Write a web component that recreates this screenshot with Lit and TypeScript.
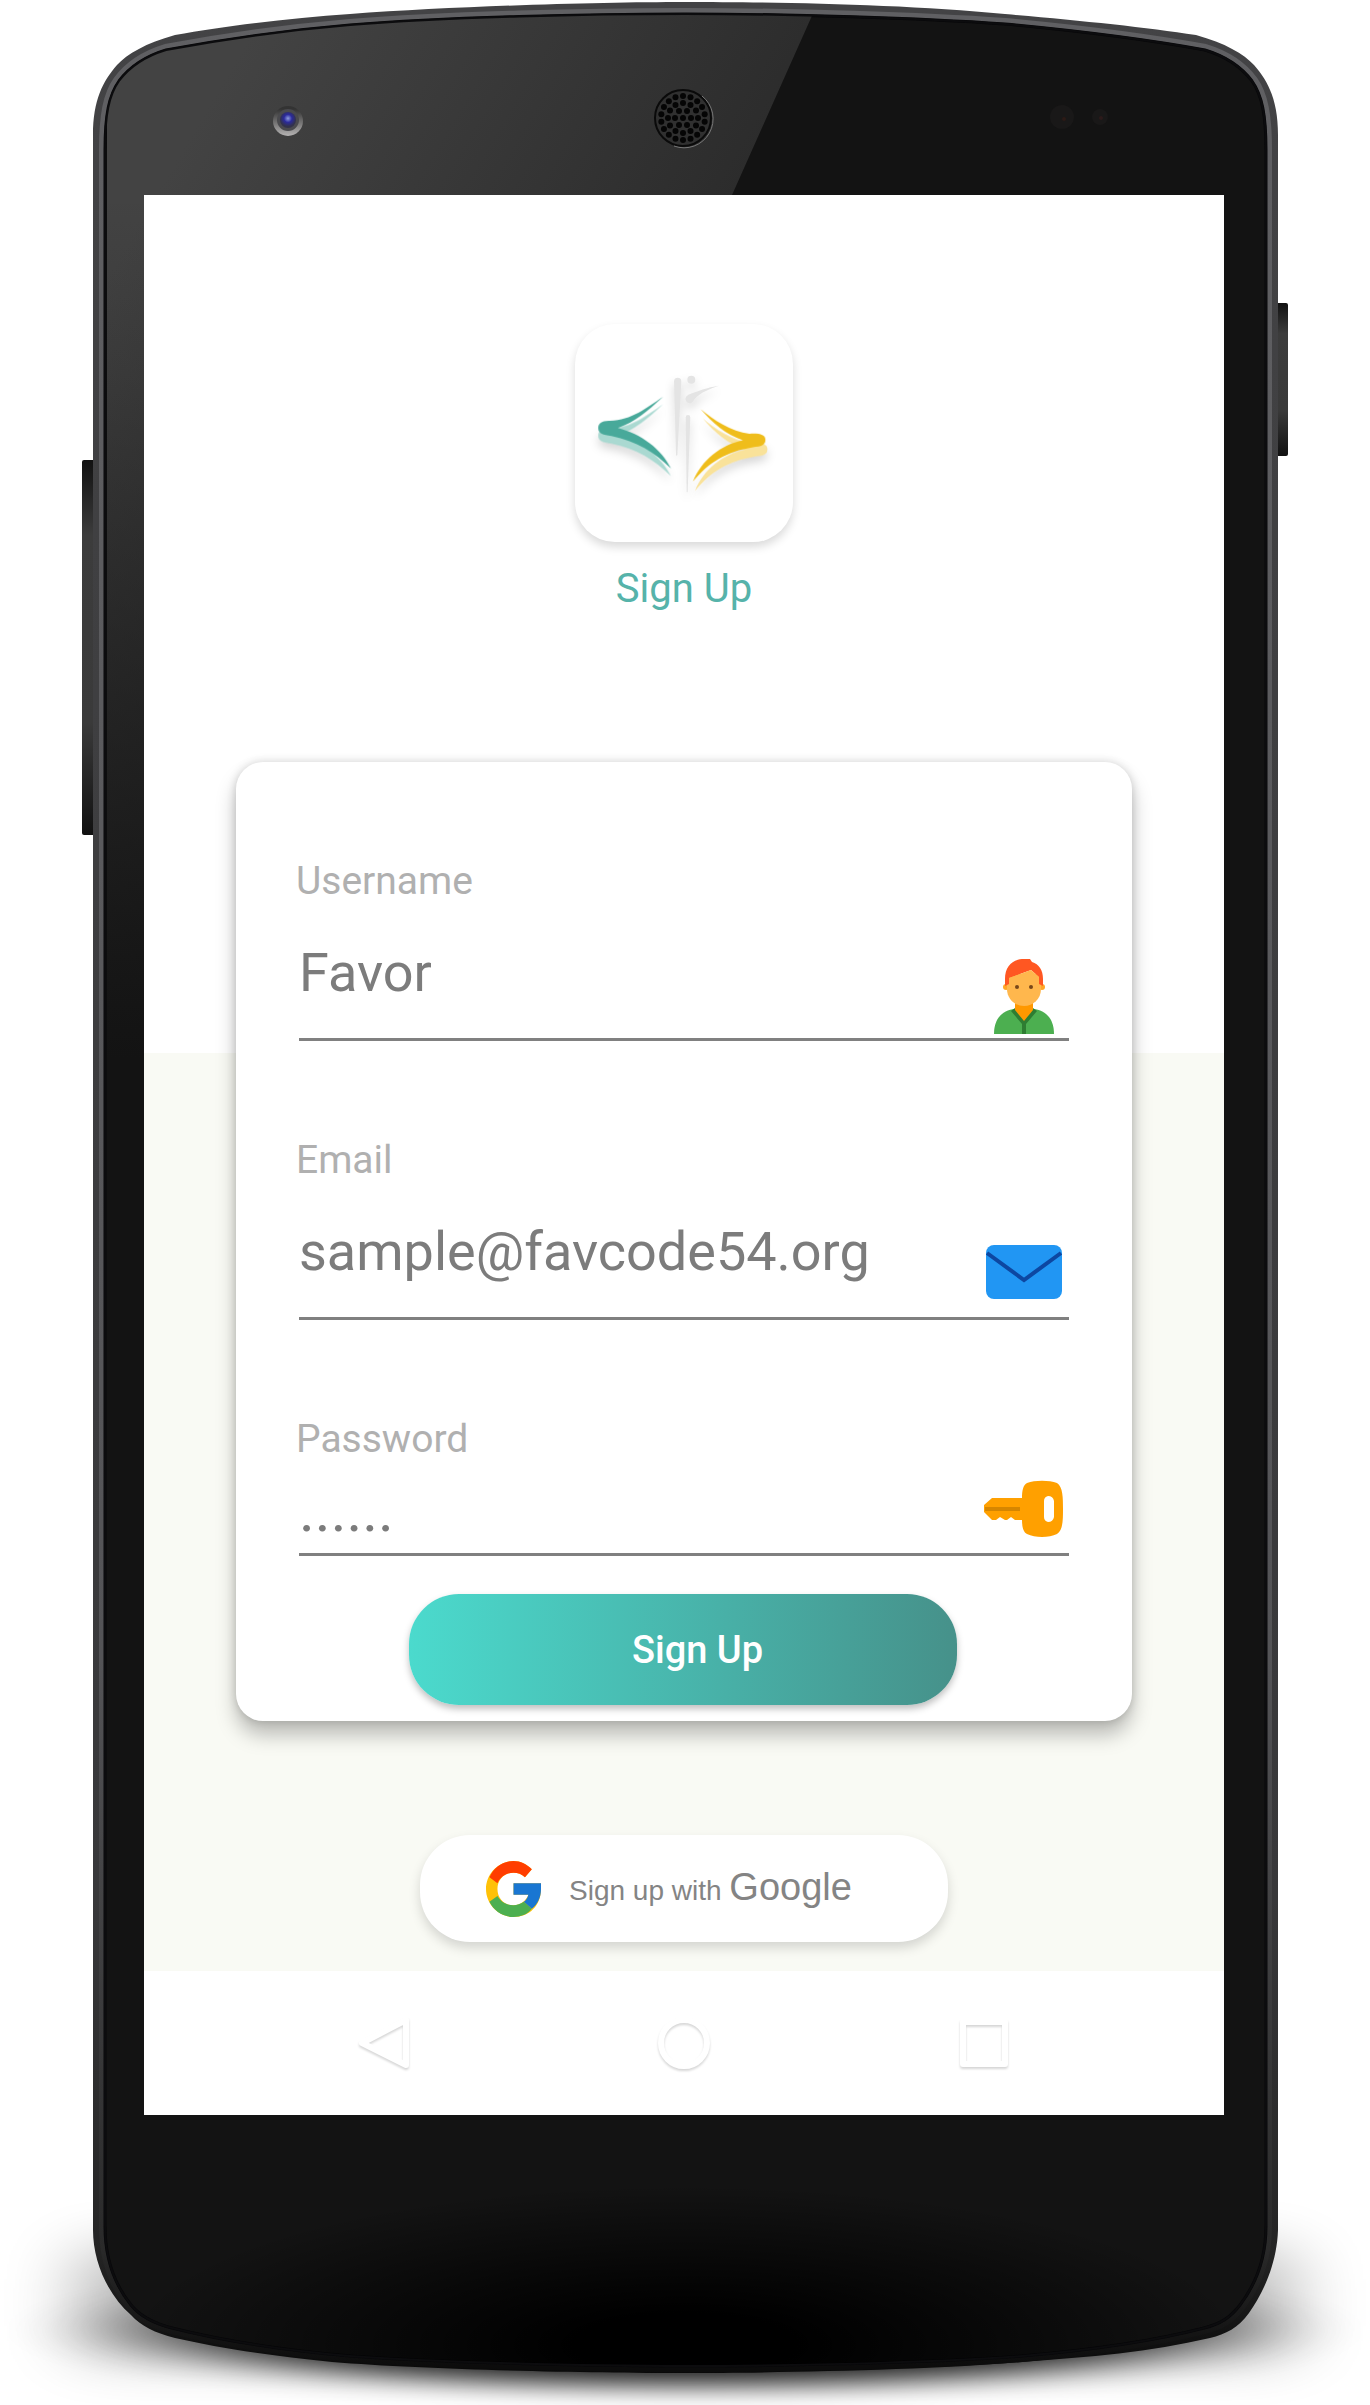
import { LitElement, html, svg, css } from "lit";
import { customElement, property } from "lit/decorators.js";

const OUTER =
  "M685 2 C770 2 900 4 1005 14 C1075 20 1145 27 1196 35 C1225 43 1244 54 1254 65 C1268 81 1278 100 1278 135 V2230 C1277 2262 1264 2292 1249 2313 C1238 2328 1226 2334 1210 2338 C1150 2352 1090 2357 1022 2362 C930 2370 780 2373 685 2373 C590 2373 430 2370 332 2362 C270 2356 220 2348 175 2338 C155 2333 141 2326 131 2315 C108 2295 93 2262 93 2230 V135 C93 100 103 81 117 65 C127 54 146 43 175 35 C225 26 290 18 350 14 C460 6 600 2 685 2 Z";
const GLASS =
  "M685 14 C790 14 920 18 1005 24 C1080 31 1150 40 1205 50 C1228 57 1243 69 1252 81 C1262 95 1266 115 1266 150 V2226 C1266 2258 1256 2284 1240 2305 C1230 2318 1220 2324 1204 2328 C1150 2342 1080 2351 1022 2356 C930 2363 780 2366 685 2366 C590 2366 430 2362 350 2356 C280 2350 220 2340 172 2328 C152 2323 140 2316 131 2305 C114 2284 105 2258 105 2226 V150 C105 115 109 95 119 81 C128 69 143 57 166 50 C225 39 290 30 350 25 C450 17 590 14 685 14 Z";

const HOLES: Array<[number, number]> = [[0, 0]];
for (const [count, radius] of [[6, 8], [12, 15], [18, 22]]) {
  for (let i = 0; i < count; i++) {
    const a = (i / count) * Math.PI * 2 + (count === 18 ? Math.PI / 18 : 0);
    HOLES.push([Math.cos(a) * radius, Math.sin(a) * radius]);
  }
}

const ICONS = {
  user: svg`
    <path d="M15 86 C15 69 25 62 36 61 H54 C65 62 75 69 75 86 Z" fill="#4caf50"/>
    <path d="M32 63 L36 60 L45 72 L54 60 L58 63 L47 76 V86 H43 V76 Z" fill="#2e7d32"/>
    <path d="M36 52 H54 V62 L45 73 L36 62 Z" fill="#ff9800"/>
    <circle cx="27" cy="39" r="3" fill="#ffa726"/><circle cx="63" cy="39" r="3" fill="#ffa726"/>
    <path d="M28 26 H62 V41 C62 51 54 58 45 58 C36 58 28 51 28 41 Z" fill="#ffb74d"/>
    <path d="M26 38 V31 C26 18 34 11 45 11 H51 L53 14 C60 16 64 22 64 31 V38 L60 36 V29 L52 22 L30 30 V36 Z" fill="#ff5722"/>
    <path d="M30 30 L52 22 L60 29 V40 H30 Z" fill="#ffb74d"/>
    <circle cx="38" cy="39" r="2" fill="#784719"/><circle cx="52" cy="39" r="2" fill="#784719"/>`,
  mail: svg`
    <rect x="7" y="18" width="76" height="54" rx="8" fill="#2196f3"/>
    <path d="M8 26 L45 53 L82 26" fill="none" stroke="#0d47a1" stroke-width="4"/>`,
  key: svg`
    <path fill-rule="evenodd" d="M5 42 L13 35 H43 C43 28 44 22 48 20 C56 17 70 17 78 20 C84 24 84 35 84 46 C84 57 84 67 78 71 C70 75 56 75 48 71 C44 69 43 63 43 57 H36 L32 54 L28 57 H26 L21 54 L17 57 H13 L5 49 Z M69 33 Q65 34 65 38 V54 Q65 58 69 59 Q74 59 75 54 V38 Q74 33 69 33 Z" fill="#ffa000"/>
    <rect x="6" y="44" width="35" height="4" fill="#d68600"/>`,
};

@customElement("phone-bezel")
class PhoneBezel extends LitElement {
  static styles = css`
    :host { display: block; }
    .art { display: block; width: 100%; height: 100%; }
  `;
  render() {
    return html`<svg class="art" viewBox="0 0 1370 2405" preserveAspectRatio="none" aria-hidden="true">
      <defs>
        <filter id="ground" x="-30%" y="-100%" width="160%" height="300%"><feGaussianBlur stdDeviation="75 12"/></filter>
        <filter id="halo" x="-20%" y="-60%" width="140%" height="220%"><feGaussianBlur stdDeviation="38 26"/></filter>
        <linearGradient id="glare" gradientUnits="userSpaceOnUse" x1="200" y1="120" x2="740" y2="440">
          <stop offset="0" stop-color="#434343"/><stop offset="1" stop-color="#262626"/>
        </linearGradient>
        <linearGradient id="fade" x1="0" y1="0" x2="0" y2="1">
          <stop offset="0" stop-color="#131313" stop-opacity="0"/><stop offset=".12" stop-color="#131313" stop-opacity=".15"/><stop offset=".6" stop-color="#131313"/>
        </linearGradient>
        <radialGradient id="base"><stop offset=".2" stop-color="#000"/><stop offset="1" stop-color="#000" stop-opacity="0"/></radialGradient>
        <linearGradient id="rim" x1="0" y1="0" x2="0" y2="1">
          <stop offset="0" stop-color="#434345"/><stop offset=".8" stop-color="#38383a"/><stop offset=".95" stop-color="#242424"/><stop offset="1" stop-color="#090909"/>
        </linearGradient>
        <linearGradient id="edge" x1="0" y1="0" x2="0" y2="1">
          <stop offset="0" stop-color="#606063"/><stop offset=".7" stop-color="#545457"/><stop offset=".95" stop-color="#2a2a2a"/><stop offset="1" stop-color="#0c0c0c"/>
        </linearGradient>
        <linearGradient id="key-side" x1="0" y1="0" x2="0" y2="1">
          <stop offset="0" stop-color="#111"/><stop offset=".2" stop-color="#3c3c3c"/><stop offset=".7" stop-color="#3a3a3a"/><stop offset="1" stop-color="#111"/>
        </linearGradient>
        <radialGradient id="lens" cy=".4"><stop offset="0" stop-color="#8f9ddd"/><stop offset=".5" stop-color="#2b2a9c"/><stop offset="1" stop-color="#32324c"/></radialGradient>
        <linearGradient id="ring" x1="0" y1="0" x2="0" y2="1"><stop offset=".1" stop-color="#333"/><stop offset="1" stop-color="#b5b3b3"/></linearGradient>
        <clipPath id="glass"><path d="${GLASS}"/></clipPath>
      </defs>
      <rect x="80" y="2250" width="1210" height="105" fill="#000" opacity=".28" filter="url(#halo)"/>
      <ellipse cx="685" cy="2330" rx="520" ry="56" fill="#000" opacity=".85" filter="url(#ground)"/>
      <rect x="82" y="460" width="14" height="375" rx="2" fill="url(#key-side)"/>
      <rect x="1274" y="303" width="14" height="153" rx="2" fill="url(#key-side)"/>
      <path d="${OUTER}" fill="url(#rim)"/>
      <path d="${GLASS}" fill="#131313" stroke="url(#edge)" stroke-width="12"/>
      <path d="${GLASS}" fill="#131313" stroke="#08080a" stroke-width="3"/>
      <g clip-path="url(#glass)">
        <path d="M107 0 H819 L732 195 L144 1512 L107 1595 Z" fill="url(#glare)"/>
        <rect x="107" y="195" width="39" height="1440" fill="url(#fade)"/>
        <ellipse cx="685" cy="2345" rx="560" ry="160" fill="url(#base)"/>
      </g>
      <path d="${GLASS}" fill="none" stroke="#0c0c0e" stroke-width="2"/>
      <circle cx="288" cy="121" r="15" fill="url(#ring)"/>
      <circle cx="288" cy="120" r="11" fill="#4a4a4e"/>
      <circle cx="288" cy="120" r="8" fill="url(#lens)"/>
      <circle cx="683" cy="118" r="28" fill="#303030" stroke="#0a0a0a" stroke-width="2"/>
      <path d="M702 96 A29 29 0 0 1 674 146" fill="none" stroke="#777" stroke-width="1"/>
      ${HOLES.map(([x, y]) => svg`<circle cx=${683 + x} cy=${118 + y} r="3" fill="#050505"/>`)}
      <circle cx="1062" cy="117" r="12" fill="#191818"/><circle cx="1064" cy="119" r="2" fill="#2c1a16"/>
      <circle cx="1100" cy="117" r="8" fill="#191818"/><circle cx="1101" cy="118" r="2" fill="#2c1a1a"/>
    </svg>`;
  }
}

@customElement("form-field")
class FormField extends LitElement {
  @property() label = "";
  @property() type = "text";
  @property() value = "";
  @property() hint = "";
  @property() icon: keyof typeof ICONS = "user";

  static styles = css`
    :host { display: block; }
    .label { display: block; font-size: 39px; line-height: 46px; color: #b0b0b0; }
    .row { display: flex; align-items: flex-end; margin-left: 3px; border-bottom: 3px solid #808080; }
    .input {
      flex: 1; min-width: 0; box-sizing: border-box; height: 134px; margin: 0; padding: 36px 0 34px;
      border: 0; outline: 0; background: none; font: 54px/64px Roboto, sans-serif; color: #7c7c7c;
    }
    .input.dots { height: 91px; padding: 13px 0 8px; font-size: 60px; line-height: 70px; }
    .input::placeholder { color: #7c7c7c; opacity: 1; }
    .icon { flex: none; width: 90px; height: 90px; }
  `;
  render() {
    return html`
      <label class="label" for="control">${this.label}</label>
      <div class="row">
        <input id="control" class="input ${this.type === "password" ? "dots" : ""}" type=${this.type} .value=${this.value} placeholder=${this.hint} />
        <svg class="icon" viewBox="0 0 90 90" aria-hidden="true">${ICONS[this.icon]}</svg>
      </div>`;
  }
}

const TEAL =
  "M370 291 C320 324 275 362 210 363 C185 362 175 371 175 385 C175 402 190 406 215 409 C290 424 344 458 394 507 C365 448 305 403 234 385 C284 368 325 333 370 291 Z";
const GOLD =
  "M483 328 C520 360 575 396 630 402 C660 400 678 405 678 420 C678 438 665 441 640 443 C560 456 508 488 460 546 C485 482 545 435 610 422 C560 405 520 372 483 328 Z";

@customElement("app-root")
class AppRoot extends LitElement {
  static styles = css`
    :host { display: block; background: #fff; font-family: Roboto, sans-serif; }
    .phone { position: relative; max-width: 1370px; margin: 0 auto; box-sizing: border-box; padding: 195px 146px 290px 144px; }
    .bezel { position: absolute; inset: 0; }
    .screen { position: relative; display: flex; flex-direction: column; background: #fff; }
    .page {
      display: flex; flex-direction: column; align-items: center; padding: 129px 92px 29px;
      background: linear-gradient(#fff 858px, #f9faf4 858px);
    }
    .logo { display: block; width: 218px; height: 218px; border-radius: 40px; background: #fff; box-shadow: 0 5px 10px rgba(0, 0, 0, 0.15); }
    .soft { filter: drop-shadow(0 16px 14px rgba(0, 0, 0, 0.16)); }
    .title { margin: 24px 0 0; font-size: 40px; line-height: 46px; font-weight: 400; color: #56b3aa; }
    .card {
      align-self: stretch; margin: 150px 0 114px; padding: 96px 63px 16px 60px;
      border-radius: 27px; background: #fff; box-shadow: 0 14px 20px rgba(0, 0, 0, 0.25), 0 0 10px rgba(0, 0, 0, 0.16);
    }
    .fields { display: flex; flex-direction: column; gap: 96px; }
    .form { display: flex; flex-direction: column; gap: 38px; }
    .button { border: 0; margin: 0; cursor: pointer; display: flex; align-items: center; }
    .primary {
      align-self: center; justify-content: center; width: 548px; max-width: 100%; height: 111px; padding: 0 0 0 30px; border-radius: 50px;
      background: linear-gradient(90deg, #4bdacd, #48b0a7 58%, #46918a); color: #fff; font: 500 38px/46px Roboto, sans-serif;
      box-shadow: 0 4px 7px rgba(0, 0, 0, 0.25);
    }
    .google {
      width: 528px; max-width: 100%; height: 107px; padding: 0 0 0 66px; gap: 28px; border-radius: 50px; background: #fff;
      color: #848484; font: 28px/48px "Liberation Sans", Arial, sans-serif; box-shadow: 0 6px 12px rgba(0, 0, 0, 0.15);
    }
    .mark { flex: none; width: 55px; height: 56px; }
    .brand { font-size: 38px; }
    .nav { display: flex; justify-content: center; align-items: center; gap: 220px; height: 144px; }
    .key { padding: 0; background: none; }
    .glyph { width: 80px; height: 80px; fill: none; stroke: #fff; stroke-width: 6px; stroke-linejoin: round; filter: drop-shadow(0 2px 1px rgba(0, 0, 0, 0.16)); }
  `;

  render() {
    return html`
      <div class="phone">
        <phone-bezel class="bezel"></phone-bezel>
        <div class="screen">
          <main class="page">
            <svg class="logo" viewBox="105 72 656 656" role="img" aria-label="Logo">
              <g class="soft" fill="#e4e4e4">
                <path d="M403 245 Q403 234 414 234 Q425 234 425 245 L413 468 H409 Z"/>
                <path d="M438 353 Q438 346 445 346 Q452 346 452 353 L444 578 H441 Z"/>
                <circle cx="455" cy="240" r="12"/>
                <path d="M538 258 C505 262 470 276 446 285 Q437 290 437 298 Q440 311 452 311 Q460 309 465 298 C482 278 510 268 538 258 Z"/>
              </g>
              <g class="soft">
                <path transform="translate(0 23)" d="${TEAL}" fill="#aad9d1"/>
                <path transform="translate(6 28)" d="${GOLD}" fill="#f9e29a"/>
              </g>
              <path d="${TEAL}" fill="#48a99a"/>
              <path d="${GOLD}" fill="#efbd1b"/>
            </svg>
            <h1 class="title">Sign Up</h1>
            <section class="card">
              <form class="form" @submit=${(e: Event) => e.preventDefault()}>
                <div class="fields">
                  <form-field label="Username" value="Favor" icon="user"></form-field>
                  <form-field label="Email" type="email" value="sample@favcode54.org" icon="mail"></form-field>
                  <form-field label="Password" type="password" hint="......" icon="key"></form-field>
                </div>
                <button class="button primary" type="submit">Sign Up</button>
              </form>
            </section>
            <button class="button google" type="button">
              <svg class="mark" viewBox="0 0 48 48" preserveAspectRatio="none" aria-hidden="true">
                <path d="M48 19 H24 V29 H37 C35 34 30 38 24 38 C16 38 10 32 10 24 C10 16 16 10 24 10 C28 10 31 11 34 14 L40 7 C36 3 30 0 24 0 C11 0 0 11 0 24 C0 37 11 48 24 48 C38 48 48 38 48 24 Z" fill="#ffc107"/>
                <path d="M3 14 L10 19 C13 13 18 10 24 10 C28 10 31 11 34 14 L40 7 C36 3 30 0 24 0 C15 0 7 5 3 14 Z" fill="#ff3d00"/>
                <path d="M24 48 C30 48 36 46 40 41 L33 35 C30 37 27 38 24 38 C18 38 13 35 10 30 L3 35 C7 43 15 48 24 48 Z" fill="#4caf50"/>
                <path d="M48 19 H24 V29 H37 C36 32 35 34 33 35 L40 41 C45 37 48 31 48 24 Z" fill="#1976d2"/>
              </svg>
              <span>Sign up with <span class="brand">Google</span></span>
            </button>
          </main>
          <nav class="nav" aria-label="System">
            <button class="button key" type="button" aria-label="Back"><svg class="glyph" viewBox="0 0 80 80"><path d="M62 17 V62 L18 40 Z"/></svg></button>
            <button class="button key" type="button" aria-label="Home"><svg class="glyph" viewBox="0 0 80 80"><circle cx="40" cy="40" r="23"/></svg></button>
            <button class="button key" type="button" aria-label="Recents"><svg class="glyph" viewBox="0 0 80 80"><rect x="19" y="19" width="42" height="42"/></svg></button>
          </nav>
        </div>
      </div>`;
  }
}
